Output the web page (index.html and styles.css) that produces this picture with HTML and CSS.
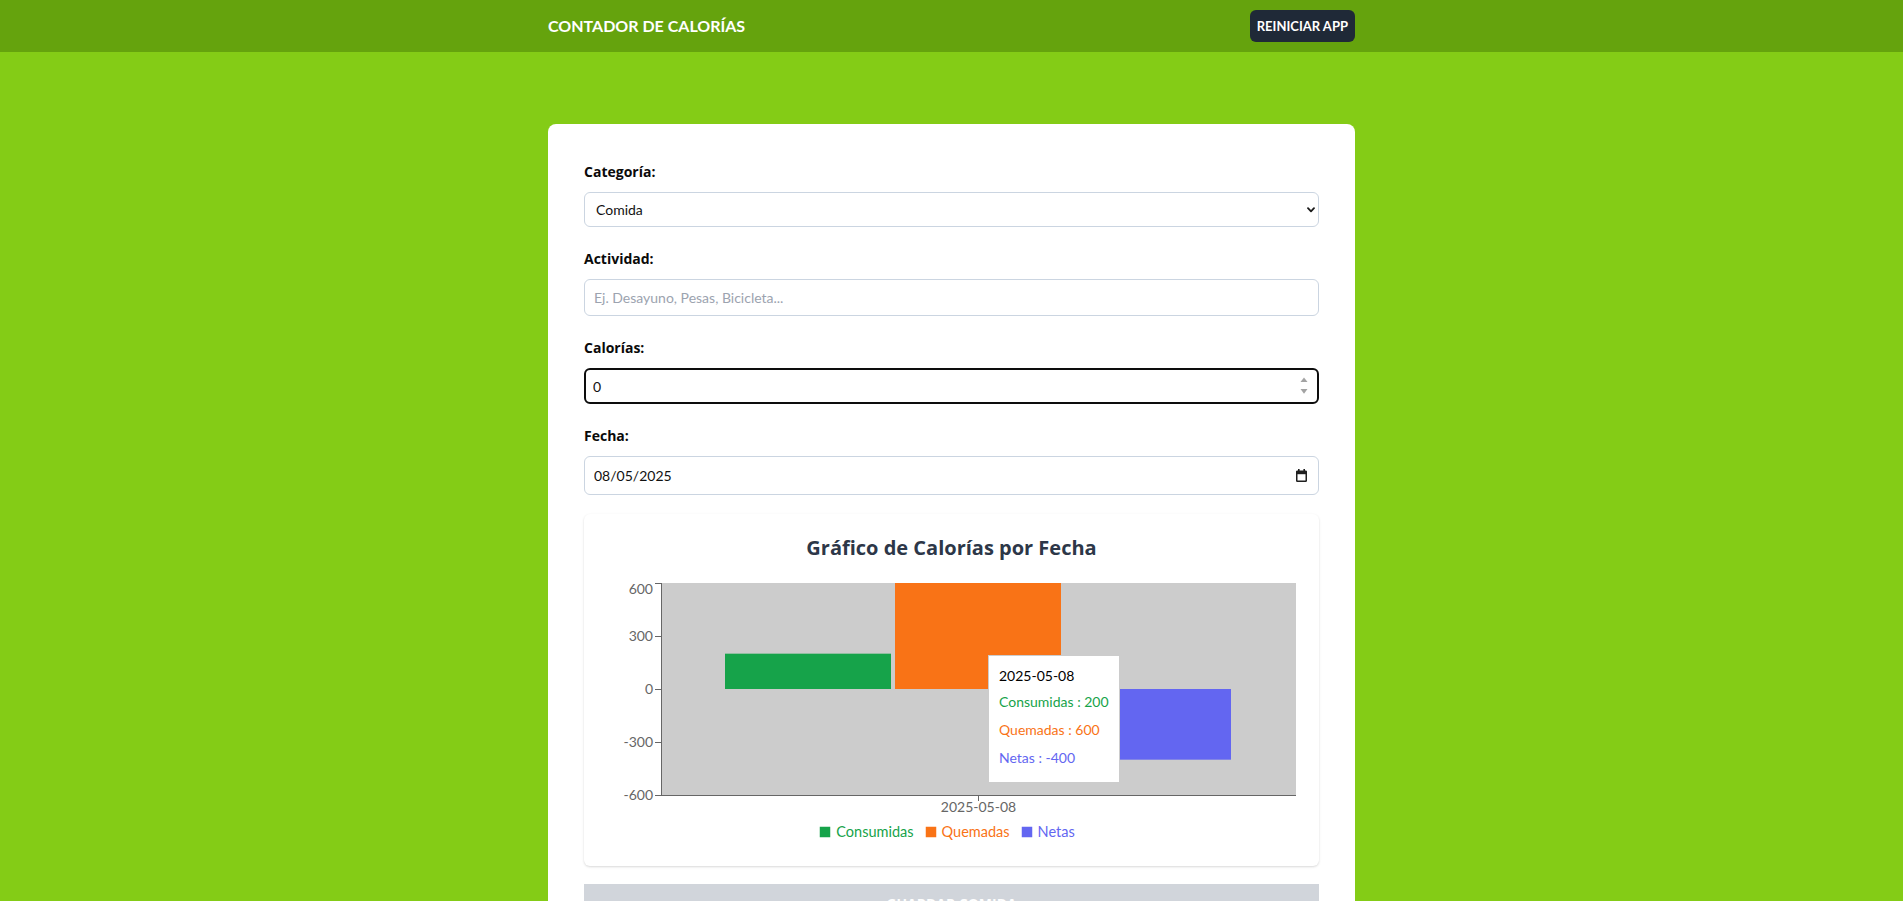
FILE: index.html
```html
<!DOCTYPE html>
<html lang="es">
<head>
<meta charset="utf-8">
<title>Contador de Calorías</title>
<link rel="stylesheet" href="styles.css">
</head>
<body>
<header class="topbar">
  <div class="container topbar-inner">
    <h1 class="brand">CONTADOR DE CALORÍAS</h1>
    <button class="reset-btn" type="button">REINICIAR APP</button>
  </div>
</header>

<main class="container page">
  <section class="form-card">
    <form class="form">
      <div class="field">
        <label class="field-label" for="category">Categoría:</label>
        <div class="control">
          <select id="category" class="input input-select">
            <option selected>Comida</option>
            <option>Ejercicio</option>
          </select>
          <svg class="select-arrow" width="8" height="6" viewBox="0 0 8 6" aria-hidden="true">
            <path d="M1 1.2 L4 4.3 L7 1.2" fill="none" stroke="#1a1a1a" stroke-width="1.8" stroke-linecap="round" stroke-linejoin="round"/>
          </svg>
        </div>
      </div>

      <div class="field">
        <label class="field-label" for="activity">Actividad:</label>
        <input id="activity" class="input input-text" type="text" placeholder="Ej. Desayuno, Pesas, Bicicleta...">
      </div>

      <div class="field">
        <label class="field-label" for="calories">Calorías:</label>
        <div class="control">
          <input id="calories" class="input input-number is-focused" type="number" value="0">
          <svg class="spinner" width="8" height="18" viewBox="0 0 8 18" aria-hidden="true">
            <path d="M4 0.5 L7.5 5 L0.5 5 Z" fill="#a3a3a3"/>
            <path d="M0.5 12 L7.5 12 L4 16.8 Z" fill="#a3a3a3"/>
          </svg>
        </div>
      </div>

      <div class="field">
        <label class="field-label" for="date">Fecha:</label>
        <div class="control">
          <input id="date" class="input input-date" type="text" value="08/05/2025">
          <svg class="calendar-icon" width="11" height="13" viewBox="0 0 11 13" aria-hidden="true">
            <rect x="2" y="0" width="1.6" height="2.5" fill="#1f1f1f"/>
            <rect x="7.4" y="0" width="1.6" height="2.5" fill="#1f1f1f"/>
            <rect x="0.75" y="2.25" width="9.5" height="10" rx="0.6" fill="none" stroke="#1f1f1f" stroke-width="1.5"/>
            <rect x="0.5" y="2" width="10" height="3.2" fill="#1f1f1f"/>
          </svg>
        </div>
      </div>

      <div class="chart-card">
        <h2 class="chart-title">Gráfico de Calorías por Fecha</h2>
        <svg class="chart" width="695" height="244" viewBox="0 0 695 244">
          <rect x="57" y="5" width="635" height="212" fill="#cccccc"/>
          <rect x="121" y="75.67" width="166" height="35.33" fill="#16a34a"/>
          <rect x="291" y="5" width="166" height="106" fill="#f97316"/>
          <rect x="461" y="111" width="166" height="70.67" fill="#6366f1"/>
          <g stroke="#666" stroke-width="1" shape-rendering="crispEdges">
            <line x1="57" y1="5" x2="57" y2="217"/>
            <line x1="57" y1="217" x2="692" y2="217"/>
            <line x1="51" y1="5" x2="57" y2="5"/>
            <line x1="51" y1="58" x2="57" y2="58"/>
            <line x1="51" y1="111" x2="57" y2="111"/>
            <line x1="51" y1="164" x2="57" y2="164"/>
            <line x1="51" y1="217" x2="57" y2="217"/>
            <line x1="374.5" y1="217" x2="374.5" y2="223"/>
          </g>
          <g class="tick-text" text-anchor="end">
            <text x="49" y="11" dy="0.355em">600</text>
            <text x="49" y="58" dy="0.355em">300</text>
            <text x="49" y="111" dy="0.355em">0</text>
            <text x="49" y="164" dy="0.355em">-300</text>
            <text x="49" y="217" dy="0.355em">-600</text>
          </g>
          <text class="tick-text" x="374.5" y="224" dy="0.71em" text-anchor="middle">2025-05-08</text>
        </svg>
        <ul class="legend">
          <li class="legend-item legend-green"><svg width="14" height="14" viewBox="0 0 32 32"><path d="M4 4h24v24h-24z" fill="#16a34a"/></svg><span>Consumidas</span></li>
          <li class="legend-item legend-orange"><svg width="14" height="14" viewBox="0 0 32 32"><path d="M4 4h24v24h-24z" fill="#f97316"/></svg><span>Quemadas</span></li>
          <li class="legend-item legend-blue"><svg width="14" height="14" viewBox="0 0 32 32"><path d="M4 4h24v24h-24z" fill="#6366f1"/></svg><span>Netas</span></li>
        </ul>

        <div class="tooltip">
          <p class="tooltip-label">2025-05-08</p>
          <ul class="tooltip-list">
            <li class="tt-green">Consumidas : 200</li>
            <li class="tt-orange">Quemadas : 600</li>
            <li class="tt-blue">Netas : -400</li>
          </ul>
        </div>
      </div>

      <button class="save-btn" type="button" disabled>GUARDAR COMIDA</button>
    </form>
  </section>
</main>
</body>
</html>
```

FILE: styles.css
```css
html {
  scrollbar-width: none;
}
html::-webkit-scrollbar {
  display: none;
}

* {
  box-sizing: border-box;
}

body {
  margin: 0;
  background: #84cc16;
  font-family: Lato, "Noto Sans", "DejaVu Sans", sans-serif;
  font-size: 16px;
  color: #111;
}

.container {
  width: 807px;
  margin: 0 auto;
}

/* Header */
.topbar {
  background: #65a30d;
  height: 52px;
}

.topbar-inner {
  height: 52px;
  display: flex;
  align-items: center;
  justify-content: space-between;
}

.brand {
  margin: 0;
  color: #fff;
  font-size: 16px;
  font-weight: 700;
  line-height: 20px;
}

.reset-btn {
  height: 32px;
  padding: 0 7px;
  border: 0;
  border-radius: 6px;
  background: #1f2937;
  color: #fff;
  font-family: inherit;
  font-size: 13px;
  font-weight: 700;
  display: flex;
  align-items: center;
}

/* Main card */
.page {
  padding-top: 72px;
  padding-bottom: 40px;
}

.form-card {
  background: #fff;
  border-radius: 8px;
  padding: 36px;
}

.form {
  display: flex;
  flex-direction: column;
  gap: 20px;
}

.field {
  display: flex;
  flex-direction: column;
}

.field-label {
  font-family: "Open Sans", Lato, sans-serif;
  font-size: 14px;
  font-weight: 700;
  line-height: 24px;
  margin-bottom: 8px;
  color: #0a0a0a;
}

.control {
  position: relative;
}

.input {
  display: block;
  width: 100%;
  border: 1px solid #cbd5e1;
  border-radius: 6px;
  background: #fff;
  font-family: inherit;
  font-size: 14px;
  color: #111;
  padding: 0 9px;
  margin: 0;
  outline: none;
}

.input::placeholder {
  color: #9ca3af;
}

.input-select {
  height: 35px;
  padding-left: 11px;
  appearance: none;
  -webkit-appearance: none;
}

.input-text {
  height: 37px;
}

.input-number {
  height: 36px;
  appearance: textfield;
  -moz-appearance: textfield;
}

.input-number.is-focused {
  border: 2px solid #0d0d0d;
  padding-left: 7px;
}

.input-number::-webkit-inner-spin-button,
.input-number::-webkit-outer-spin-button {
  -webkit-appearance: none;
  margin: 0;
}

.input-date {
  height: 39px;
}

.select-arrow {
  position: absolute;
  right: 4px;
  top: 15px;
  pointer-events: none;
}

.spinner {
  position: absolute;
  right: 11px;
  top: 9px;
  pointer-events: none;
}

.calendar-icon {
  position: absolute;
  right: 12px;
  top: 13px;
  pointer-events: none;
}

/* Chart card */
.chart-card {
  position: relative;
  background: #fff;
  border-radius: 6px;
  box-shadow: 0 1px 3px rgba(0, 0, 0, 0.1), 0 1px 2px rgba(0, 0, 0, 0.06);
  padding: 20px 20px 24px;
  margin-top: -1px;
  margin-bottom: -2px;
}

.chart-title {
  margin: 0 0 16px;
  text-align: center;
  font-family: "Open Sans", Lato, sans-serif;
  font-size: 20px;
  line-height: 28px;
  font-weight: 700;
  color: #2d3748;
}

.chart {
  display: block;
  overflow: visible;
}

.tick-text {
  font-family: Lato, "Noto Sans", sans-serif;
  font-size: 14px;
  fill: #666;
}

.legend {
  list-style: none;
  margin: 0;
  padding: 0;
  display: flex;
  justify-content: center;
  font-size: 14.5px;
  line-height: 20px;
}

.legend-item {
  display: flex;
  align-items: center;
  margin-right: 10px;
}

.legend-item svg {
  display: block;
  margin-right: 4px;
}

.legend-green { color: #16a34a; }
.legend-orange { color: #f97316; }
.legend-blue { color: #6366f1; }

.tooltip {
  position: absolute;
  left: 404px;
  top: 141px;
  background: #fff;
  border: 1px solid #ccc;
  padding: 10px;
  white-space: nowrap;
  font-size: 14px;
  line-height: 20px;
}

.tooltip-label {
  margin: 0;
  color: #000;
}

.tooltip-list {
  list-style: none;
  margin: 2px 0 0;
  padding: 0;
}

.tooltip-list li {
  padding: 4px 0;
}

.tt-green { color: #16a34a; }
.tt-orange { color: #f97316; }
.tt-blue { color: #6366f1; }

/* Save button */
.save-btn {
  width: 100%;
  border: 0;
  background: #d1d5db;
  color: #fff;
  font-family: "Open Sans", Lato, sans-serif;
  font-size: 14px;
  font-weight: 700;
  line-height: 20px;
  padding: 10px;
}
```
